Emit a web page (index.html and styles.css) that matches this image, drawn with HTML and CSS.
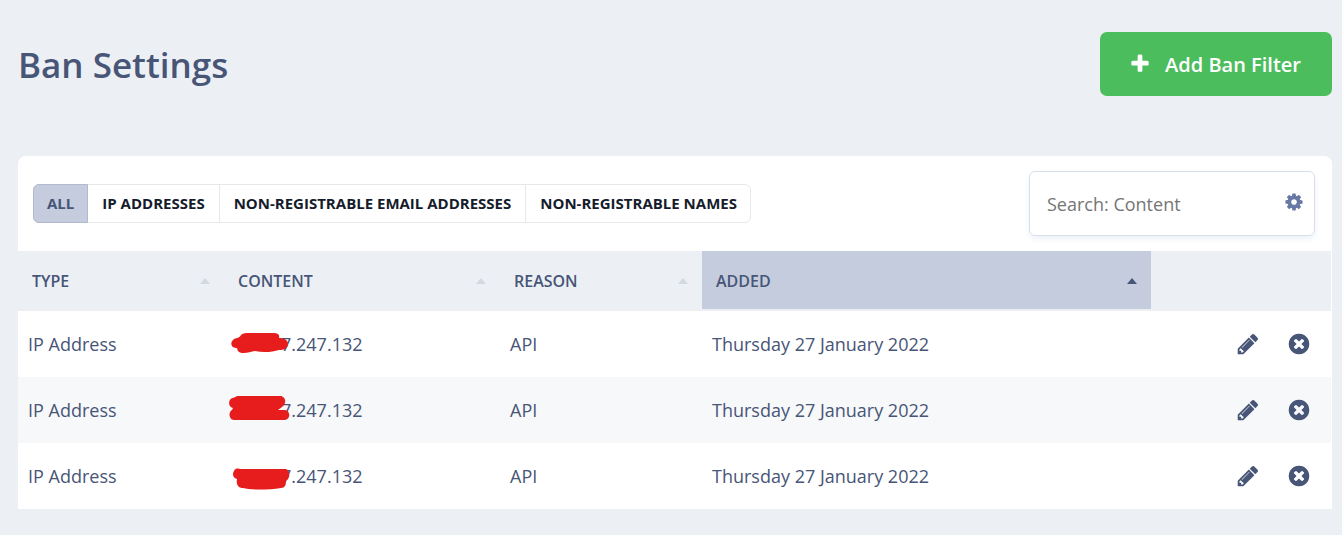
FILE: index.html
```html
<!DOCTYPE html>
<html lang="en">
  <head>
    <meta charset="utf-8" />
    <meta name="viewport" content="width=device-width, initial-scale=1" />
    <title>Ban Settings</title>
    <link rel="stylesheet" href="styles.css">
  </head>

  <body>
    <!-- Icons shared by the page -->
    <svg class="sprite" aria-hidden="true">
      <symbol id="plus" viewBox="0 0 1792 1792">
        <path d="M1600 736v192q0 40-28 68t-68 28h-416v416q0 40-28 68t-68 28h-192q-40 0-68-28t-28-68v-416h-416q-40 0-68-28t-28-68v-192q0-40 28-68t68-28h416v-416q0-40 28-68t68-28h192q40 0 68 28t28 68v416h416q40 0 68 28t28 68z" />
      </symbol>
      <symbol id="cog" viewBox="0 0 1792 1792">
        <path d="M1152 896q0-106-75-181t-181-75-181 75-75 181 75 181 181 75 181-75 75-181zm512-109v222q0 12-8 23t-20 13l-185 28q-19 54-39 91 35 50 107 138 10 12 10 25t-9 23q-27 37-99 108t-94 71q-12 0-26-9l-138-108q-44 23-91 38-16 136-29 186-7 28-36 28h-222q-14 0-24.500-8.500t-11.500-21.500l-28-184q-49-16-90-37l-141 107q-10 9-25 9-14 0-25-11-126-114-165-168-7-10-7-23 0-12 8-23 15-21 51-66.500t54-70.500q-27-50-41-99l-183-27q-13-2-21-12.500t-8-23.500v-222q0-12 8-23t19-13l186-28q14-46 39-92-40-57-107-138-10-12-10-24 0-10 9-23 26-36 98.500-107.500t94.500-71.500q13 0 26 10l138 107q44-23 91-38 16-136 29-186 7-28 36-28h222q14 0 24.500 8.500t11.500 21.500l28 184q49 16 90 37l142-107q9-9 24-9 13 0 25 10 129 119 165 170 7 8 7 22 0 12-8 23-15 21-51 66.500t-54 70.500q26 50 41 98l183 28q13 2 21 12.500t8 23.500z" />
      </symbol>
      <symbol id="pencil" viewBox="0 0 1792 1792">
        <path d="M491 1536l91-91-235-235-91 91v107h128v128h107zm523-928q0-22-22-22-10 0-17 7l-542 542q-7 7-7 17 0 22 22 22 10 0 17-7l542-542q7-7 7-17zm-54-192l416 416-832 832h-416v-416zm683 96q0 53-37 90l-166 166-416-416 166-165q36-38 90-38 53 0 91 38l235 234q37 39 37 91z" />
      </symbol>
      <symbol id="remove" viewBox="0 0 1792 1792">
        <path d="M1277 1122q0-26-19-45l-181-181 181-181q19-19 19-45 0-27-19-46l-90-90q-19-19-46-19-26 0-45 19l-181 181-181-181q-19-19-45-19-27 0-46 19l-90 90q-19 19-19 46 0 26 19 45l181 181-181 181q-19 19-19 45 0 27 19 46l90 90q19 19 46 19 26 0 45-19l181-181 181 181q19 19 45 19 27 0 46-19l90-90q19-19 19-46zm387-226q0 209-103 385.500t-279.500 279.500-385.500 103-385.500-103-279.500-279.500-103-385.500 103-385.500 279.500-279.500 385.500-103 385.500 103 279.500 279.500 103 385.500z" />
      </symbol>
    </svg>

    <header class="page-header">
      <h1>Ban Settings</h1>
      <button type="button" class="add">
        <svg class="add-icon"><use href="#plus" /></svg>
        Add Ban Filter
      </button>
    </header>

    <main class="box">
      <div class="toolbar">
        <nav class="tabs">
          <a href="#all" class="active">All</a>
          <a href="#ip">IP Addresses</a>
          <a href="#email">Non-registrable email addresses</a>
          <a href="#names">Non-registrable names</a>
        </nav>

        <div class="search">
          <input type="search" placeholder="Search: Content" aria-label="Search: Content" />
          <button type="button" aria-label="Advanced search">
            <svg class="cog-icon"><use href="#cog" /></svg>
          </button>
        </div>
      </div>

      <table>
        <colgroup>
          <col class="col-type" />
          <col class="col-content" />
          <col class="col-reason" />
          <col class="col-added" />
          <col class="col-actions" />
        </colgroup>
        <thead>
          <tr>
            <th><a href="#type">Type</a></th>
            <th><a href="#content">Content</a></th>
            <th><a href="#reason">Reason</a></th>
            <th class="sorted"><a href="#added">Added</a></th>
            <th></th>
          </tr>
        </thead>
        <tbody>
          <tr>
            <td>IP Address</td>
            <td>
              <span class="redacted">
                <svg viewBox="0 0 60 28">
                  <path d="M3 10C6 7 9 9 11 5C13 3 16 3 20 3H44C48 3 50 5 49 8C54 8 58 10 58 14C58 19 53 20 49 20C43 22 33 23 25 21C20 22 11 25 8 21C7 20 8 18 6 18C1 18 0 13 3 10Z" />
                </svg>
              </span>7.247.132
            </td>
            <td>API</td>
            <td>Thursday 27 January 2022</td>
            <td>
              <div class="actions">
                <a href="#edit" aria-label="Edit"><svg><use href="#pencil" /></svg></a>
                <a href="#delete" aria-label="Delete"><svg><use href="#remove" /></svg></a>
              </div>
            </td>
          </tr>
          <tr>
            <td>IP Address</td>
            <td>
              <span class="redacted">
                <svg viewBox="0 0 60 28">
                  <path d="M2 2C5 2 5 0 9 0H50C56 0 57 8 52 11L48 14H54C61 14 61 24 54 24H4C-1 24-2 16 2 14L3 12C-2 11-2 4 2 2Z" />
                </svg>
              </span>7.247.132
            </td>
            <td>API</td>
            <td>Thursday 27 January 2022</td>
            <td>
              <div class="actions">
                <a href="#edit" aria-label="Edit"><svg><use href="#pencil" /></svg></a>
                <a href="#delete" aria-label="Delete"><svg><use href="#remove" /></svg></a>
              </div>
            </td>
          </tr>
          <tr>
            <td>IP Address</td>
            <td>
              <span class="redacted">
                <svg viewBox="0 0 60 28">
                  <path d="M4 9C6 5 9 7 11 7H55C60 7 61 16 56 19C56 23 55 26 51 26C38 28 20 28 13 26C8 26 6 22 7 17C3 16 2 12 4 9Z" />
                </svg>
              </span>7.247.132
            </td>
            <td>API</td>
            <td>Thursday 27 January 2022</td>
            <td>
              <div class="actions">
                <a href="#edit" aria-label="Edit"><svg><use href="#pencil" /></svg></a>
                <a href="#delete" aria-label="Delete"><svg><use href="#remove" /></svg></a>
              </div>
            </td>
          </tr>
        </tbody>
      </table>
    </main>
  </body>
</html>
```

FILE: styles.css
```css
* {
  box-sizing: border-box;
}
body {
  margin: 0;
  padding: 32px 10px 26px 18px;
  background: #ecf0f5;
  color: #475577;
  font-family: "Segoe UI", "Open Sans", sans-serif;
  font-size: 18px;
}
a {
  color: inherit;
  text-decoration: none;
}
svg {
  display: block;
  fill: currentColor;
}
.sprite {
  position: absolute;
  width: 0;
  height: 0;
}

/* Title and main button */
.page-header {
  display: flex;
  justify-content: space-between;
  align-items: center;
  height: 64px;
  margin-bottom: 60px;
}
h1 {
  margin: 0;
  font-size: 35px;
  font-weight: 600;
}
.add {
  display: flex;
  align-items: center;
  gap: 14px;
  height: 64px;
  padding: 0 31px 0 29px;
  border: 0;
  border-radius: 7px;
  background: #4bbd5d;
  color: #fff;
  font: inherit;
  font-size: 20px;
  font-weight: 600;
}
.add-icon {
  width: 22px;
  height: 22px;
}

/* Filter tabs and search */
.box {
  border-radius: 8px 8px 0 0;
  background: #fff;
}
.toolbar {
  display: flex;
  justify-content: space-between;
  align-items: center;
  padding: 15px 17px 15px 15px;
}
.tabs {
  display: flex;
  height: 39px;
  border: 1px solid #e8e8ea;
  border-radius: 6px;
  color: #151c2c;
  font-size: 15px;
  font-weight: 700;
  line-height: 37px;
  text-transform: uppercase;
}
.tabs a {
  padding: 0 14px;
  border-right: 1px solid #e8e8ea;
}
.tabs a:last-child {
  padding-right: 13px;
  border-right: 0;
}
.tabs .active {
  margin: -1px 0 -1px -1px;
  padding: 0 13px;
  border: 1px solid #b0b9cd;
  border-radius: 6px 0 0 6px;
  background: #c5ccdd;
  color: #475577;
}
.search {
  display: flex;
  align-items: center;
  width: 286px;
  height: 65px;
  padding: 0 10px 0 17px;
  border: 1px solid #d9deeb;
  border-radius: 6px;
  box-shadow: 0 3px 6px #edf2f7;
}
.search input {
  flex: 1;
  min-width: 0;
  padding: 0;
  border: 0;
  outline: 0;
  background: none;
  font: inherit;
}
.search input::placeholder {
  color: #757575;
}
.search button {
  padding: 0 0 4px;
  border: 0;
  background: none;
  color: #6878a5;
}
.cog-icon {
  width: 20px;
  height: 20px;
}

/* Ban list */
table {
  width: 100%;
  padding-right: 1px;
  border-spacing: 0;
  table-layout: fixed;
}
.col-type {
  width: 206px;
}
.col-content {
  width: 276px;
}
.col-reason {
  width: 202px;
}
.col-actions {
  width: 180px;
}
th {
  height: 60px;
  padding: 2px 14px 0;
  border-bottom: 2px solid #eceef2;
  background: #ecf0f5;
  font-size: 16px;
  font-weight: 600;
  text-align: left;
  text-transform: uppercase;
}
th a {
  display: flex;
  justify-content: space-between;
  align-items: center;
}
th a::after {
  content: "";
  border: 5px solid transparent;
  border-top: 0;
  border-bottom: 6px solid #d3d8e1;
}
.sorted {
  background: #c5ccdd;
}
.sorted a::after {
  border-bottom-color: #475577;
}
td {
  height: 66px;
  padding: 0 10px;
}
tbody tr:nth-child(even) {
  background: #f7f8fa;
}
.redacted {
  position: relative;
  display: inline-block;
  width: 47px;
}
.redacted svg {
  position: absolute;
  left: -4px;
  bottom: -7px;
  width: 60px;
  height: 28px;
  overflow: visible;
  fill: #e71d1d;
}
.actions {
  display: flex;
  justify-content: flex-end;
  gap: 27px;
  padding-right: 10px;
}
.actions svg {
  width: 24px;
  height: 24px;
}
```
